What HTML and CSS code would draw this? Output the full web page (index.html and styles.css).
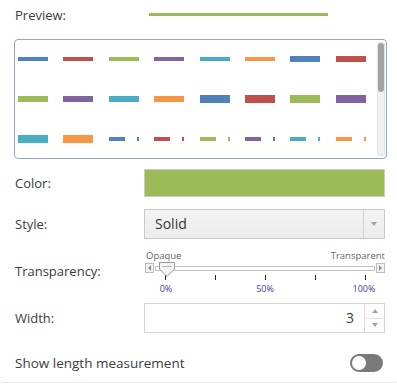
FILE: index.html
```html
<!DOCTYPE html>
<html>
<head>
<meta charset="utf-8">
<link rel="stylesheet" href="styles.css">
</head>
<body>
<div class="panel">
  <div class="row preview-row">
    <div class="label">Preview:</div>
    <div class="preview-line"></div>
  </div>

  <div class="swatches">
    <div class="grid">
      <span class="sw w4 blue"></span><span class="sw w4 red"></span><span class="sw w4 green"></span><span class="sw w4 purple"></span><span class="sw w4 cyan"></span><span class="sw w4 orange"></span><span class="sw w6 blue"></span><span class="sw w6 red"></span>
      <span class="sw w6 green"></span><span class="sw w6 purple"></span><span class="sw w6 cyan"></span><span class="sw w6 orange"></span><span class="sw w8 blue"></span><span class="sw w8 red"></span><span class="sw w8 green"></span><span class="sw w8 purple"></span>
      <span class="sw w8 cyan"></span><span class="sw w8 orange"></span>
      <span class="dd blue"><i class="dash"></i><i class="dot"></i></span>
      <span class="dd red"><i class="dash"></i><i class="dot"></i></span>
      <span class="dd green"><i class="dash"></i><i class="dot"></i></span>
      <span class="dd purple"><i class="dash"></i><i class="dot"></i></span>
      <span class="dd cyan"><i class="dash"></i><i class="dot"></i></span>
      <span class="dd orange"><i class="dash"></i><i class="dot"></i></span>
    </div>
    <div class="scrollbar"><div class="thumb"></div></div>
  </div>

  <div class="row color-row">
    <div class="label">Color:</div>
    <div class="color-box"></div>
  </div>

  <div class="row style-row">
    <div class="label">Style:</div>
    <div class="select">
      <div class="select-text">Solid</div>
      <div class="select-btn"><span class="tri-down"></span></div>
    </div>
  </div>

  <div class="row trans-row">
    <div class="label">Transparency:</div>
    <div class="slider">
      <div class="slider-labels"><span>Opaque</span><span>Transparent</span></div>
      <div class="slider-bar">
        <span class="arrow-btn"><span class="tri-left"></span></span>
        <div class="track">
          <svg class="thumb-knob" width="16" height="15" viewBox="0 0 16 15"><path d="M0.5 0.5 H15.5 V7 L8 14.5 L0.5 7 Z" fill="#f4f4f4" stroke="#9a9a9a"/><path d="M3 4.5 H13" stroke="#b5b5b5"/></svg>
        </div>
        <span class="arrow-btn"><span class="tri-right"></span></span>
      </div>
      <div class="ticks">
        <i></i><i></i><i></i><i></i><i></i>
      </div>
      <div class="tick-labels"><span>0%</span><span>50%</span><span>100%</span></div>
    </div>
  </div>

  <div class="row width-row">
    <div class="label">Width:</div>
    <div class="spin">
      <div class="spin-val">3</div>
      <div class="spin-btns">
        <span class="sb"><span class="tri-up"></span></span>
        <span class="sb"><span class="tri-down"></span></span>
      </div>
    </div>
  </div>

  <div class="row toggle-row">
    <div class="toggle-label">Show length measurement</div>
    <div class="toggle"><span class="knob"></span></div>
  </div>
</div>
</body>
</html>
```
FILE: styles.css
```css
html, body {
  margin: 0;
  padding: 0;
  background: #fff;
}
body {
  font-family: "Open Sans", "Liberation Sans", sans-serif;
  color: #3c3c3c;
  width: 397px;
  height: 384px;
  overflow: hidden;
}
.panel {
  height: 383px;
  border-bottom: 1px solid #e6e6e6;
  border-radius: 0 0 4px 4px;
  box-sizing: border-box;
}
.row {
  display: flex;
  align-items: center;
  padding-left: 15px;
}
.label {
  width: 129px;
  font-size: 13px;
  flex: none;
}
.preview-row {
  height: 29px;
}
.preview-line {
  margin-left: 5px;
  width: 179px;
  height: 3px;
  background: #9bbb59;
}
.swatches {
  margin: 10px 0 0 14px;
  width: 373px;
  height: 120px;
  border: 1px solid #94a8bb;
  border-radius: 4px;
  box-sizing: border-box;
  display: flex;
}
.grid {
  flex: 1;
  display: grid;
  grid-template-columns: repeat(8, 30px);
  grid-template-rows: repeat(3, 40px);
  column-gap: 15.4px;
  padding: 0 0 0 3px;
  margin-top: -1px;
  align-items: center;
}
.sw { display: block; width: 30px; }
.w4 { height: 4px; }
.w6 { height: 6px; }
.w8 { height: 8px; }
.blue { --c: #4f81bd; background: #4f81bd; }
.red { --c: #c0504d; background: #c0504d; }
.green { --c: #9bbb59; background: #9bbb59; }
.purple { --c: #8064a2; background: #8064a2; }
.cyan { --c: #4bacc6; background: #4bacc6; }
.orange { --c: #f79646; background: #f79646; }
.dd {
  background: none;
  display: flex;
  height: 4px;
  width: 30px;
}
.dd .dash { display: block; width: 16px; background: var(--c); }
.dd .dot { display: block; width: 2px; margin-left: 12px; background: var(--c); }
.scrollbar {
  width: 6px;
  margin: 2px 1px 2px 0;
  background: #f1f1f1;
  border: 1px solid #e2e2e2;
  border-radius: 3px;
  flex: none;
}
.thumb {
  height: 49px;
  background: #a3a3a3;
  border-radius: 3px;
}
.color-row {
  margin-top: 10px;
  height: 28px;
}
.color-box {
  width: 241px;
  height: 28px;
  background: #9bbb59;
  border: 1px solid #c9cec2;
  box-sizing: border-box;
}
.style-row {
  margin-top: 12px;
  height: 30px;
}
.select {
  width: 241px;
  height: 30px;
  display: flex;
  border: 1px solid #c9c9c9;
  box-sizing: border-box;
  background: linear-gradient(#f3f3f3, #ececec);
}
.select-text {
  flex: 1;
  font-size: 14px;
  line-height: 28px;
  padding-left: 10px;
  color: #333;
}
.select-btn {
  width: 20px;
  border-left: 1px solid #d2d2d2;
  display: flex;
  align-items: center;
  justify-content: center;
}
.tri-down {
  width: 0; height: 0;
  border-left: 3.5px solid transparent;
  border-right: 3.5px solid transparent;
  border-top: 4px solid #9aa4b4;
}
.tri-up {
  width: 0; height: 0;
  border-left: 3.5px solid transparent;
  border-right: 3.5px solid transparent;
  border-bottom: 4px solid #9aa4b4;
}
.trans-row {
  margin-top: 11px;
  height: 50px;
  align-items: flex-start;
}
.trans-row .label {
  margin-top: 12px;
}
.slider {
  width: 240px;
  margin-left: 1px;
}
.slider-labels {
  display: flex;
  justify-content: space-between;
  font-size: 9.5px;
  color: #666;
  line-height: 12px;
  padding-left: 1px;
}
.slider-bar {
  display: flex;
  align-items: center;
  height: 10px;
  margin-top: 1px;
}
.arrow-btn {
  width: 7px;
  height: 8px;
  border: 1px solid #bdbdbd;
  background: #f2f2f2;
  display: flex;
  align-items: center;
  justify-content: center;
  flex: none;
}
.tri-left {
  width: 0; height: 0;
  border-top: 3px solid transparent;
  border-bottom: 3px solid transparent;
  border-right: 3px solid #8e8e8e;
}
.tri-right {
  width: 0; height: 0;
  border-top: 3px solid transparent;
  border-bottom: 3px solid transparent;
  border-left: 3px solid #8e8e8e;
}
.track {
  flex: 1;
  height: 3px;
  margin: 0 1px;
  border: 1px solid #c4c4c4;
  background: #fff;
  position: relative;
}
.thumb-knob {
  position: absolute;
  left: 3px;
  top: -5px;
}
.ticks {
  display: flex;
  justify-content: space-between;
  padding: 0 19px 0 20px;
  height: 6px;
  margin-top: 2px;
}
.ticks i {
  display: block;
  width: 1px;
  height: 5px;
  background: #222;
}
.tick-labels {
  display: flex;
  font-size: 9px;
  color: #3d3d9a;
  line-height: 12px;
  margin-top: 2px;
  padding-left: 1px;
}
.tick-labels span {
  width: 40px;
  text-align: center;
  flex: none;
}
.tick-labels span + span { margin-left: 59px; }
.width-row {
  margin-top: 3px;
  height: 30px;
}
.spin {
  width: 241px;
  height: 30px;
  display: flex;
  border: 1px solid #d4d4d4;
  box-sizing: border-box;
}
.spin-val {
  flex: 1;
  text-align: right;
  font-size: 14px;
  line-height: 28px;
  padding-right: 10px;
}
.spin-btns {
  width: 19px;
  border-left: 1px solid #dcdcdc;
  display: flex;
  flex-direction: column;
}
.sb {
  flex: 1;
  display: flex;
  align-items: center;
  justify-content: center;
}
.sb + .sb { border-top: 1px solid #e4e4e4; }
.toggle-row {
  margin-top: 18px;
  height: 24px;
  justify-content: space-between;
  padding-right: 14px;
}
.toggle-label {
  font-size: 13.5px;
}
.toggle {
  width: 33px;
  height: 18px;
  background: #7a7a7a;
  border-radius: 9px;
  display: flex;
  align-items: center;
  padding-left: 2px;
  box-sizing: border-box;
}
.knob {
  width: 14px;
  height: 14px;
  border-radius: 50%;
  background: #fff;
}
```
